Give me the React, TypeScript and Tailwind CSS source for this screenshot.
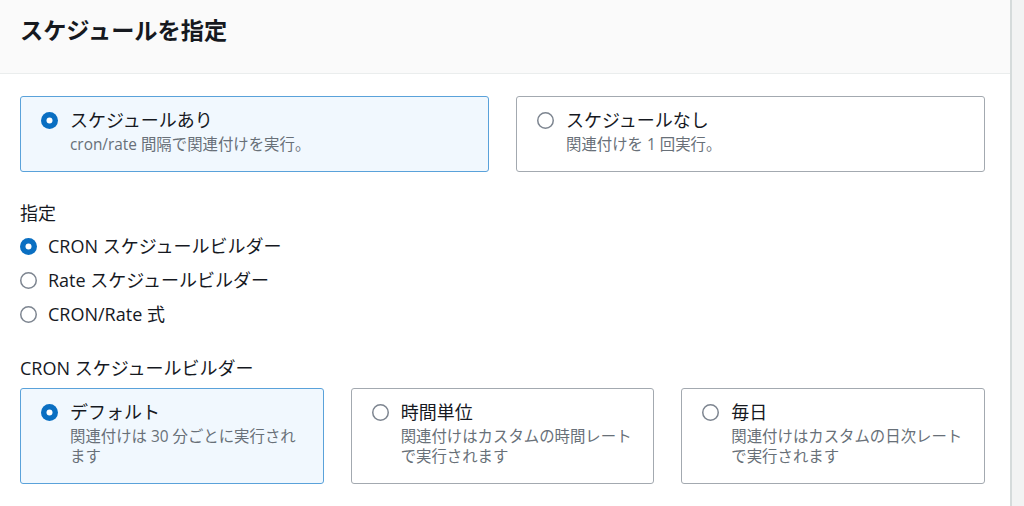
import React from "react";

type Tile = { title: string; desc: string[]; selected?: boolean };

function Radio({ checked }: { checked?: boolean }) {
  return (
    <svg width="17" height="17" viewBox="0 0 34 34" className="shrink-0">
      {checked ? (
        <>
          <circle cx="17" cy="17" r="17" fill="#0a6fc2" />
          <circle cx="17" cy="17" r="6" fill="#ffffff" />
        </>
      ) : (
        <circle cx="17" cy="17" r="15.5" fill="#ffffff" stroke="#7d8590" strokeWidth="3" />
      )}
    </svg>
  );
}

function TileCard({ title, desc, selected }: Tile) {
  return (
    <div
      className={
        selected
          ? "rounded-[3px] border border-[#5aa2da] bg-[#f1f8fe] pl-[20px] pr-3 pt-[10px] pb-[16px]"
          : "rounded-[3px] border border-[#a3a9b0] bg-white pl-[20px] pr-3 pt-[10px] pb-[16px]"
      }
    >
      <div className="flex h-[26px] items-center gap-[12px]">
        <Radio checked={selected} />
        <span className="text-[18px] leading-[26px] text-[#16191f]">{title}</span>
      </div>
      <p className="mt-[2px] whitespace-nowrap pl-[29px] text-[15.4px] leading-[20px] text-[#687078]">
        {desc.map((line, i) => (
          <React.Fragment key={i}>
            {i > 0 && <br />}
            {line}
          </React.Fragment>
        ))}
      </p>
    </div>
  );
}

const modes = [
  { label: "CRON スケジュールビルダー", checked: true },
  { label: "Rate スケジュールビルダー" },
  { label: "CRON/Rate 式" },
];

export default function App() {
  return (
    <div
      className="flex h-[506px] w-[1024px] overflow-hidden bg-[#f2f3f3]"
      style={{ fontFamily: '"Open Sans", "Noto Sans CJK JP", sans-serif' }}
    >
      <div className="w-[1012px] shrink-0 border-r-2 border-[#d5dbdb] bg-white">
        {/* Header */}
        <header className="border-b border-[#eaeded] bg-[#fafafa] px-5 pt-[15px] pb-[28px]">
          <h2 className="text-[23.2px] font-bold leading-[30px] text-[#16191f]">スケジュールを指定</h2>
        </header>

        <div className="pl-5 pr-[25px] pt-[22px]">
          {/* Schedule tiles */}
          <div className="grid grid-cols-2 gap-[27px]">
            <TileCard title="スケジュールあり" desc={["cron/rate 間隔で関連付けを実行。"]} selected />
            <TileCard title="スケジュールなし" desc={["関連付けを 1 回実行。"]} />
          </div>

          {/* Mode */}
          <div className="mt-[29px] text-[18px] leading-[24px] text-[#16191f]">指定</div>
          <div className="mt-[4px] flex flex-col">
            {modes.map((m) => (
              <div key={m.label} className="flex h-[34px] items-center gap-[11px]">
                <Radio checked={m.checked} />
                <span className="text-[18px] text-[#16191f]">{m.label}</span>
              </div>
            ))}
          </div>

          {/* CRON builder */}
          <div className="mt-[25px] text-[18px] leading-[24px] text-[#16191f]">CRON スケジュールビルダー</div>
          <div className="mt-[8px] grid grid-cols-3 gap-[27px]">
            <TileCard title="デフォルト" desc={["関連付けは 30 分ごとに実行され", "ます"]} selected />
            <TileCard title="時間単位" desc={["関連付けはカスタムの時間レート", "で実行されます"]} />
            <TileCard title="毎日" desc={["関連付けはカスタムの日次レート", "で実行されます"]} />
          </div>
        </div>
      </div>
    </div>
  );
}
